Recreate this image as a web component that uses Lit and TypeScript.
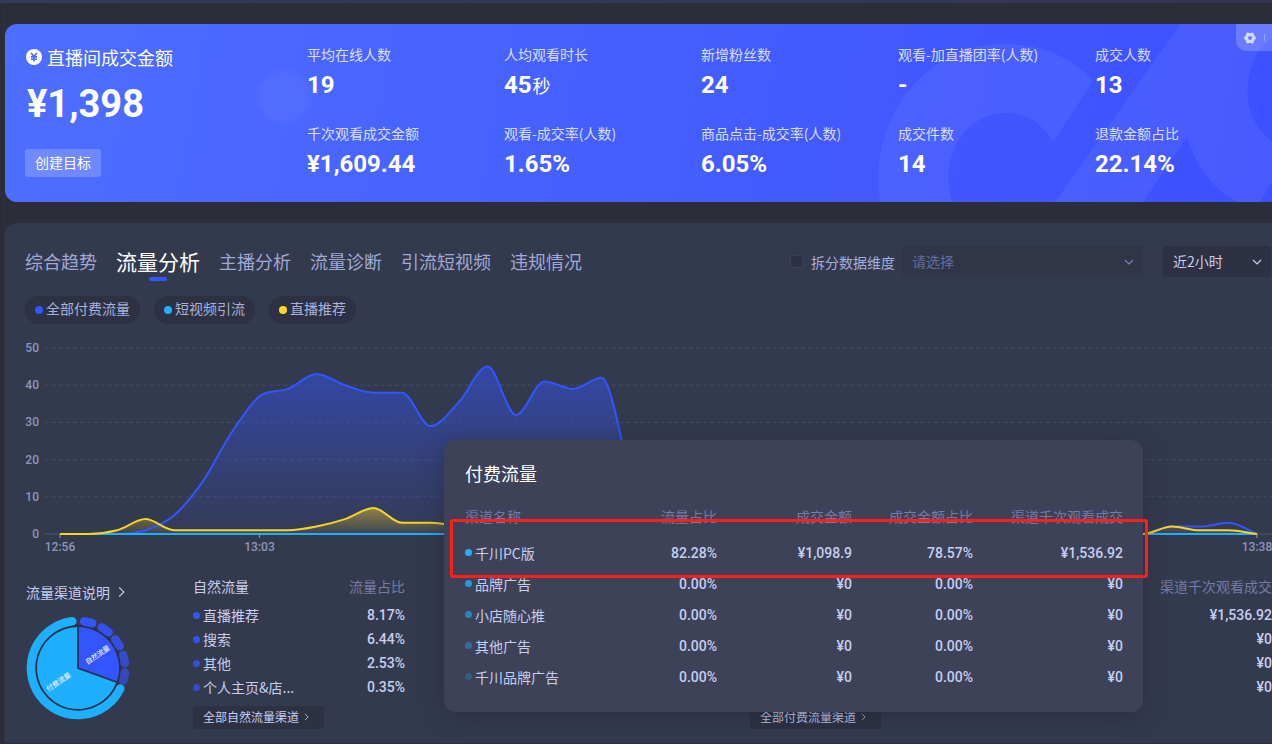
import { LitElement, html, svg, css } from "lit";
import { customElement } from "lit/decorators.js";

interface Metric {
  label: string;
  value: string;
  unit?: string;
}

const METRICS: Metric[] = [
  { label: "平均在线人数", value: "19" },
  { label: "人均观看时长", value: "45", unit: "秒" },
  { label: "新增粉丝数", value: "24" },
  { label: "观看-加直播团率(人数)", value: "-" },
  { label: "成交人数", value: "13" },
  { label: "千次观看成交金额", value: "¥1,609.44" },
  { label: "观看-成交率(人数)", value: "1.65%" },
  { label: "商品点击-成交率(人数)", value: "6.05%" },
  { label: "成交件数", value: "14" },
  { label: "退款金额占比", value: "22.14%" },
];

const TABS = ["综合趋势", "流量分析", "主播分析", "流量诊断", "引流短视频", "违规情况"];
const ACTIVE_TAB = 1;

const LEGEND = [
  { name: "全部付费流量", tone: "blue" },
  { name: "短视频引流", tone: "cyan" },
  { name: "直播推荐", tone: "yellow" },
];

const ORGANIC = [
  { name: "直播推荐", share: "8.17%", alpha: 1 },
  { name: "搜索", share: "6.44%", alpha: 0.9 },
  { name: "其他", share: "2.53%", alpha: 0.8 },
  { name: "个人主页&店...", share: "0.35%", alpha: 0.7 },
];

const PAID_RPM = ["¥1,536.92", "¥0", "¥0", "¥0"];

const PAID_DETAIL = [
  { name: "千川PC版", cells: ["82.28%", "¥1,098.9", "78.57%", "¥1,536.92"], alpha: 1 },
  { name: "品牌广告", cells: ["0.00%", "¥0", "0.00%", "¥0"], alpha: 0.8 },
  { name: "小店随心推", cells: ["0.00%", "¥0", "0.00%", "¥0"], alpha: 0.6 },
  { name: "其他广告", cells: ["0.00%", "¥0", "0.00%", "¥0"], alpha: 0.42 },
  { name: "千川品牌广告", cells: ["0.00%", "¥0", "0.00%", "¥0"], alpha: 0.25 },
];

// Chart geometry: one sample per minute from 12:56 to 13:38.
const CHART_W = 1227;
const CHART_H = 200;
const BASE_Y = 193;
const UNIT = 3.72;
const FIRST_X = 15;
const STEP = 28.5;
const MINUTES = 42;

const pad = (head: number[], tail: number[]) => [
  ...head,
  ...new Array(MINUTES + 1 - head.length - tail.length).fill(0),
  ...tail,
];

const PAID_SERIES = pad(
  [0, 0, 0, 1, 5, 14, 27, 37, 39, 43, 40, 38, 38, 29, 35.5, 45, 32, 41, 39, 42, 17],
  [2, 2, 3, 0],
);
const LIVE_SERIES = pad([0, 0, 1, 4, 1, 1, 1, 1, 1, 2, 4, 7, 3, 3, 2], [2, 1, 1, 0]);

// Cubic interpolation with averaged tangents, flattened at the samples where the series turns.
function curve(values: number[]): string {
  const x = (i: number) => FIRST_X + i * STEP;
  const y = values.map((v) => BASE_Y - v * UNIT);
  const slope = y.slice(1).map((v, i) => (v - y[i]) / STEP);
  const tangent = y.map((_, i) => {
    if (i === 0) return slope[0];
    if (i === y.length - 1) return slope[i - 1];
    const a = slope[i - 1];
    const b = slope[i];
    if (a * b <= 0) return 0;
    const limit = 3 * Math.min(Math.abs(a), Math.abs(b));
    return Math.sign(a) * Math.min(Math.abs(a + b) / 2, limit);
  });
  let d = `M${x(0)} ${y[0]}`;
  for (let i = 1; i < y.length; i++) {
    const third = STEP / 3;
    d += `C${x(i - 1) + third} ${y[i - 1] + tangent[i - 1] * third} ${x(i) - third} ${
      y[i] - tangent[i] * third
    } ${x(i)} ${y[i]}`;
  }
  return d;
}

const END_X = FIRST_X + MINUTES * STEP;
const area = (d: string) => `${d}L${END_X} ${BASE_Y}L${FIRST_X} ${BASE_Y}Z`;

// Angles are in degrees, clockwise from twelve o'clock.
function arc(radius: number, from: number, to: number): string {
  const point = (deg: number) => {
    const rad = (deg * Math.PI) / 180;
    return `${(53 + radius * Math.sin(rad)).toFixed(2)} ${(53 - radius * Math.cos(rad)).toFixed(2)}`;
  };
  return `M${point(from)}A${radius} ${radius} 0 ${to - from > 180 ? 1 : 0} 1 ${point(to)}`;
}
const slice = (radius: number, from: number, to: number) => `${arc(radius, from, to)}L53 53Z`;

@customElement("app-root")
export class AppRoot extends LitElement {
  static styles = css`
    :host {
      display: block;
      min-height: 100vh;
      overflow: hidden;
      background: #2b2e39;
      color: #c6cdf0;
      font: 14px/24px "Noto Sans CJK SC", sans-serif;
    }
    * {
      box-sizing: border-box;
    }
    button,
    select,
    input {
      margin: 0;
      padding: 0;
      border: 0;
      background: none;
      color: inherit;
      font: inherit;
    }
    button {
      cursor: pointer;
    }
    a {
      color: inherit;
      text-decoration: none;
    }
    table {
      border-collapse: collapse;
      width: 100%;
    }
    th,
    td {
      padding: 0;
      font-weight: 400;
      text-align: right;
      white-space: nowrap;
    }
    th:first-child,
    td:first-child {
      text-align: left;
    }
    .strip {
      height: 3px;
      background: linear-gradient(90deg, #313c57, #343650);
    }
    .page {
      margin-left: 4px;
      padding-top: 21px;
      border-left: 1px solid #30303f;
    }
    .num {
      font-family: Roboto, "Noto Sans CJK SC", sans-serif;
    }

    .banner {
      position: relative;
      overflow: hidden;
      height: 178px;
      padding: 20px 0 0 20px;
      border-radius: 12px 0 0 12px;
      background: linear-gradient(100deg, #4e6eff 0%, #4560ff 45%, #3c50ff 100%);
      color: #fff;
    }
    .backdrop {
      position: absolute;
      inset: 0;
      width: 100%;
      height: 100%;
    }
    .banner-grid {
      position: relative;
      display: grid;
      grid-template-columns: 282px 1fr;
      margin-right: -20px;
    }
    .title {
      display: flex;
      align-items: center;
      gap: 4px;
      margin-bottom: 2px;
      font-size: 18px;
      line-height: 26px;
      white-space: nowrap;
    }
    .amount {
      padding-left: 2px;
      font-size: 38px;
      font-weight: 700;
      line-height: 64px;
    }
    .goal {
      height: 28px;
      margin-top: 13px;
      padding: 0 10px 2px;
      border-radius: 3px;
      background: rgba(255, 255, 255, 0.2);
      line-height: 26px;
    }
    .metrics {
      display: grid;
      grid-template-columns: repeat(5, 1fr);
      row-gap: 19px;
      margin: 0;
    }
    .metric-label {
      margin-bottom: 2px;
      line-height: 20px;
      color: rgba(255, 255, 255, 0.8);
      white-space: nowrap;
    }
    .metric-value {
      margin: 0;
      height: 38px;
      font-size: 24px;
      font-weight: 700;
      line-height: 38px;
    }
    .unit {
      margin-left: 1px;
      font-size: 18px;
      font-weight: 400;
    }
    .tools {
      position: absolute;
      top: 0;
      right: 0;
      display: flex;
      align-items: center;
      gap: 8px;
      width: 36px;
      height: 27px;
      padding-left: 8px;
      border-radius: 0 0 0 10px;
      background: rgba(255, 255, 255, 0.2);
    }
    .gear {
      display: flex;
    }
    .rule {
      width: 1px;
      height: 7px;
      background: rgba(255, 255, 255, 0.3);
    }

    .panel {
      position: relative;
      margin-top: 21px;
      padding: 23px 0 14px 20px;
      border-radius: 12px 0 0 0;
      background: #343a4e;
    }
    .head {
      display: flex;
      align-items: center;
      height: 31px;
      padding-right: 1px;
    }
    .tabs {
      display: flex;
      align-items: center;
      gap: 19px;
      flex: 1;
    }
    .tab {
      font-size: 18px;
      line-height: 31px;
      color: #9fa8d6;
      white-space: nowrap;
    }
    .tab.on {
      position: relative;
      font-size: 21px;
      color: #fff;
    }
    .tab.on::after {
      content: "";
      position: absolute;
      left: 50%;
      bottom: -4px;
      width: 18px;
      height: 4px;
      margin-left: -9px;
      border-radius: 2px;
      background: #3355ff;
    }
    .split {
      display: flex;
      align-items: center;
      gap: 8px;
      margin-right: 7px;
      color: #a4addb;
      line-height: 22px;
      white-space: nowrap;
    }
    .box {
      appearance: none;
      width: 13px;
      height: 13px;
      border: 1px solid #3b4057;
      border-radius: 1px;
      background: #2d3143;
    }
    .picker {
      display: grid;
      align-items: center;
    }
    .picker > * {
      grid-area: 1 / 1;
    }
    .picker svg {
      justify-self: end;
      margin-right: 9px;
      pointer-events: none;
    }
    .select {
      appearance: none;
      width: 100%;
      height: 31px;
      padding: 0 10px 2px;
      border-radius: 3px;
      background: #2d3143;
    }
    .dimension {
      width: 241px;
      margin-right: 20px;
      color: #7b83bb;
    }
    .dimension .select {
      background: #303548;
      color: #646b9f;
    }
    .range {
      width: 108px;
    }
    .legend {
      display: flex;
      gap: 14px;
      margin-top: 19px;
    }
    .pill {
      display: flex;
      align-items: center;
      gap: 3px;
      height: 28px;
      padding: 0 10px 4px;
      border-radius: 14px;
      background: #2d3143;
      color: #a9b1da;
      line-height: 24px;
    }
    .dot {
      flex: none;
      width: 7px;
      height: 7px;
      border-radius: 50%;
    }
    .pill .dot {
      margin-top: 4px;
      width: 8px;
      height: 8px;
    }
    .blue {
      background: #3355ff;
    }
    .cyan {
      background: #1eb0ff;
    }
    .yellow {
      background: #ffd91f;
    }

    .chart {
      display: grid;
      grid-template-columns: 14px 1fr;
      column-gap: 6px;
      margin-top: 17px;
      color: #8d95bd;
      font-size: 12px;
      font-weight: 500;
    }
    .y-axis {
      display: flex;
      flex-direction: column;
      justify-content: space-between;
      height: 200px;
      line-height: 14px;
      text-align: right;
    }
    .plot {
      display: block;
      width: 100%;
      height: 200px;
    }
    .plot path {
      vector-effect: non-scaling-stroke;
    }
    .x-axis {
      grid-column: 2;
      display: grid;
      grid-template-columns: repeat(6, 1fr);
      margin: 0 15px;
      line-height: 12px;
    }
    .tick {
      display: flex;
      justify-content: center;
      width: 0;
      white-space: nowrap;
    }
    .tick.last {
      grid-column: 6;
      justify-self: end;
    }

    .channels {
      display: grid;
      grid-template-columns: 168px 212px 1fr;
      margin-top: 22px;
    }
    .guide {
      display: flex;
      align-items: center;
      gap: 8px;
      margin-top: 6px;
      padding-left: 1px;
      line-height: 22px;
      white-space: nowrap;
    }
    .pie {
      display: block;
      margin-top: 12px;
    }
    .pie-text {
      fill: #e4ecff;
      font-size: 7px;
      font-weight: 500;
      text-anchor: middle;
    }
    .heading {
      padding-bottom: 6px;
      line-height: 22px;
    }
    .dim {
      color: #747ba8;
    }
    .channel {
      display: flex;
      align-items: center;
      gap: 3px;
    }
    .value {
      font-family: Roboto, "Noto Sans CJK SC", sans-serif;
      font-weight: 500;
    }
    .more {
      display: flex;
      align-items: center;
      gap: 5px;
      width: 131px;
      height: 23px;
      margin-top: 7px;
      padding: 0 10px 2px;
      border-radius: 3px;
      background: #2d3143;
      font-size: 12px;
      line-height: 21px;
      white-space: nowrap;
    }
    .paid {
      padding-left: 345px;
    }
    .paid th,
    .paid td {
      text-align: right;
    }

    .popup {
      position: absolute;
      left: 439px;
      top: 217px;
      width: 699px;
      height: 272px;
      padding: 20px 20px 0 21px;
      border-radius: 12px;
      background: #3d4259;
      box-shadow: 0 4px 24px rgba(30, 33, 50, 0.45);
    }
    .popup-title {
      margin: 0 0 19px;
      font-size: 18px;
      font-weight: 400;
      line-height: 26px;
      color: #fff;
    }
    .detail {
      table-layout: fixed;
    }
    .detail td {
      height: 31px;
    }
    .detail .heading {
      height: 32px;
      padding-bottom: 10px;
    }
    .c-name {
      width: 172px;
    }
    .c-share {
      width: 80px;
    }
    .c-gmv {
      width: 135px;
    }
    .c-ratio {
      width: 121px;
    }
    .marker {
      position: absolute;
      left: 6px;
      top: 79px;
      width: 698px;
      height: 59px;
      border: 3px solid #ff2015;
      border-radius: 3px;
      pointer-events: none;
    }
  `;

  private chevronDown() {
    return html`<svg width="10" height="8" viewBox="0 0 10 8" fill="none" stroke="currentColor" stroke-width="1.2">
      <path d="M1 2L5 6L9 2"></path>
    </svg>`;
  }

  private chevronRight(width: number, height: number) {
    return html`<svg width=${width} height=${height} viewBox="0 0 6 10" fill="none" stroke="currentColor">
      <path d="M1 1L5 5L1 9"></path>
    </svg>`;
  }

  private banner() {
    const teeth = [0, 60, 120, 180, 240, 300].map((deg) => {
      const rad = (deg * Math.PI) / 180;
      return { x: 6 + 4.3 * Math.cos(rad), y: 6 + 4.3 * Math.sin(rad) };
    });
    return html`<section class="banner">
      <svg class="backdrop" viewBox="5 24 1267 178" preserveAspectRatio="xMaxYMin slice" aria-hidden="true">
        <defs>
          <radialGradient id="glow">
            <stop offset="0" stop-color="#fff" stop-opacity="0.05"></stop>
            <stop offset="0.75" stop-color="#fff" stop-opacity="0.04"></stop>
            <stop offset="1" stop-color="#fff" stop-opacity="0"></stop>
          </radialGradient>
        </defs>
        <circle cx="284" cy="97" r="30" fill="url(#glow)"></circle>
        <g fill="#fff" fill-opacity="0.06">
          <path d="M880 202C868 118 925 44 1005 44C1043 44 1073 58 1093 81L1053 142C1042 124 1028 113 1006 113C966 113 938 155 952 202Z"></path>
          <path d="M1180 24H1272V38C1251 52 1243 86 1250 110C1255 125 1263 135 1272 141V182L1260 202H1238C1212 189 1196 167 1187 137L1143 202H1055Z"></path>
        </g>
      </svg>
      <div class="banner-grid">
        <div>
          <div class="title">
            <svg width="18" height="18" viewBox="0 0 18 18" aria-hidden="true">
              <circle cx="9" cy="9" r="8" fill="#fff"></circle>
              <path d="M6.2 5L9 8.6L11.8 5M9 8.6V13.5M6 8.9H12M6 11.3H12" fill="none" stroke="#4b69ff" stroke-width="1.6"></path>
            </svg>
            <span>直播间成交金额</span>
          </div>
          <div class="amount num">¥1,398</div>
          <button class="goal" type="button">创建目标</button>
        </div>
        <dl class="metrics">
          ${METRICS.map(
            (m) => html`<div>
              <dt class="metric-label">${m.label}</dt>
              <dd class="metric-value num">${m.value}${m.unit ? html`<span class="unit">${m.unit}</span>` : null}</dd>
            </div>`,
          )}
        </dl>
      </div>
      <div class="tools">
        <button class="gear" type="button" aria-label="设置">
          <svg width="12" height="12" viewBox="0 0 12 12">
            <circle cx="6" cy="6" r="3.5" fill="none" stroke="#d3daf8" stroke-width="3"></circle>
            ${teeth.map((t) => svg`<circle cx=${t.x} cy=${t.y} r="1.7" fill="#d3daf8"></circle>`)}
          </svg>
        </button>
        <span class="rule"></span>
      </div>
    </section>`;
  }

  private chart() {
    const paid = curve(PAID_SERIES);
    const live = curve(LIVE_SERIES);
    const rows = [0, 1, 2, 3, 4].map((i) => 7 + i * 37.2);
    const ticks = [FIRST_X, FIRST_X + 7 * STEP, END_X];
    return html`<div class="chart num">
      <div class="y-axis">${[50, 40, 30, 20, 10, 0].map((v) => html`<span>${v}</span>`)}</div>
      <svg class="plot" viewBox="0 0 ${CHART_W} ${CHART_H}" preserveAspectRatio="none" fill="none">
        <defs>
          <linearGradient id="paid-fill" x1="0" y1="0" x2="0" y2="1">
            <stop offset="0" stop-color="#3355ff" stop-opacity="0.5"></stop>
            <stop offset="1" stop-color="#3355ff" stop-opacity="0.04"></stop>
          </linearGradient>
          <linearGradient id="live-fill" x1="0" y1="0" x2="0" y2="1">
            <stop offset="0" stop-color="#ffd91f" stop-opacity="0.45"></stop>
            <stop offset="1" stop-color="#ffd91f" stop-opacity="0.04"></stop>
          </linearGradient>
        </defs>
        ${rows.map((y) => svg`<path d="M0 ${y}H${CHART_W}" stroke="#444b6b" stroke-dasharray="4 3"></path>`)}
        <path d="M0 ${BASE_Y}H${CHART_W}" stroke="#4b5273"></path>
        ${ticks.map((x) => svg`<path d="M${x} ${BASE_Y}V${BASE_Y + 4}" stroke="#8d95bd"></path>`)}
        <path d=${area(paid)} fill="url(#paid-fill)"></path>
        <path d=${area(live)} fill="url(#live-fill)"></path>
        <path d=${paid} stroke="#3355ff" stroke-width="2"></path>
        <path d="M${FIRST_X} ${BASE_Y}H${END_X}" stroke="#1eb0ff" stroke-width="2"></path>
        <path d=${live} stroke="#f5d327" stroke-width="2"></path>
      </svg>
      <div class="x-axis">
        <span class="tick">12:56</span>
        <span class="tick">13:03</span>
        <span class="tick last">13:38</span>
      </div>
    </div>`;
  }

  private pie() {
    const segments = [12.5, 35.5, 57.5, 79, 100.5];
    return html`<svg class="pie" width="106" height="106" viewBox="0 0 106 106" fill="none">
      <circle cx="53" cy="53" r="42" stroke="#2c3145" stroke-width="3"></circle>
      <path d=${slice(41, 110, 360)} fill="#1eb0ff"></path>
      <path d=${slice(41, 0, 110)} fill="#3355ff"></path>
      <path d="M53 11V53L92.5 67.4" stroke="#2c3350" stroke-width="1.8"></path>
      <path d=${arc(47, 116, 353)} stroke="#1eb0ff" stroke-width="8.6" stroke-linecap="round"></path>
      ${segments.map(
        (a, i) => svg`<path d=${arc(47, a - 5, a + 5)} stroke="#3355ff" stroke-opacity=${1 - i * 0.1}
          stroke-width="8.6" stroke-linecap="round"></path>`,
      )}
      <text class="pie-text" x="74" y="42" transform="rotate(-34 74 42)">自然流量</text>
      <text class="pie-text" x="35" y="69" transform="rotate(-34 35 69)">付费流量</text>
    </svg>`;
  }

  private channels() {
    return html`<div class="channels">
      <div>
        <a class="guide" href="#guide">流量渠道说明 ${this.chevronRight(7, 12)}</a>
        ${this.pie()}
      </div>
      <div>
        <table>
          <thead>
            <tr>
              <th class="heading" scope="col">自然流量</th>
              <th class="heading dim" scope="col">流量占比</th>
            </tr>
          </thead>
          <tbody>
            ${ORGANIC.map(
              (row) => html`<tr>
                <td>
                  <span class="channel"><span class="dot blue" style="opacity:${row.alpha}"></span>${row.name}</span>
                </td>
                <td class="value">${row.share}</td>
              </tr>`,
            )}
          </tbody>
        </table>
        <a class="more" href="#organic">全部自然流量渠道 ${this.chevronRight(5, 8)}</a>
      </div>
      <div class="paid">
        <table>
          <thead>
            <tr>
              <th class="heading dim" scope="col">渠道千次观看成交</th>
            </tr>
          </thead>
          <tbody>
            ${PAID_RPM.map((v) => html`<tr><td class="value">${v}</td></tr>`)}
          </tbody>
        </table>
        <a class="more" href="#paid">全部付费流量渠道 ${this.chevronRight(5, 8)}</a>
      </div>
    </div>`;
  }

  private popup() {
    return html`<aside class="popup">
      <h2 class="popup-title">付费流量</h2>
      <table class="detail">
        <colgroup>
          <col class="c-name" />
          <col class="c-share" />
          <col class="c-gmv" />
          <col class="c-ratio" />
          <col />
        </colgroup>
        <thead>
          <tr>
            <th class="heading dim" scope="col">渠道名称</th>
            <th class="heading dim" scope="col">流量占比</th>
            <th class="heading dim" scope="col">成交金额</th>
            <th class="heading dim" scope="col">成交金额占比</th>
            <th class="heading dim" scope="col">渠道千次观看成交</th>
          </tr>
        </thead>
        <tbody>
          ${PAID_DETAIL.map(
            (row) => html`<tr>
              <td>
                <span class="channel"><span class="dot cyan" style="opacity:${row.alpha}"></span>${row.name}</span>
              </td>
              ${row.cells.map((c) => html`<td class="value">${c}</td>`)}
            </tr>`,
          )}
        </tbody>
      </table>
      <div class="marker"></div>
    </aside>`;
  }

  render() {
    return html`<div class="strip"></div>
      <main class="page">
        ${this.banner()}
        <section class="panel">
          <header class="head">
            <nav class="tabs">
              ${TABS.map(
                (t, i) => html`<button class="tab ${i === ACTIVE_TAB ? "on" : ""}" type="button">${t}</button>`,
              )}
            </nav>
            <label class="split"><input class="box" type="checkbox" />拆分数据维度</label>
            <div class="picker dimension">
              <select class="select" aria-label="数据维度">
                <option>请选择</option>
              </select>
              ${this.chevronDown()}
            </div>
            <div class="picker range">
              <select class="select" aria-label="时间范围">
                <option>近2小时</option>
              </select>
              ${this.chevronDown()}
            </div>
          </header>
          <div class="legend">
            ${LEGEND.map((l) => html`<span class="pill"><span class="dot ${l.tone}"></span>${l.name}</span>`)}
          </div>
          ${this.chart()} ${this.channels()} ${this.popup()}
        </section>
      </main>`;
  }
}
